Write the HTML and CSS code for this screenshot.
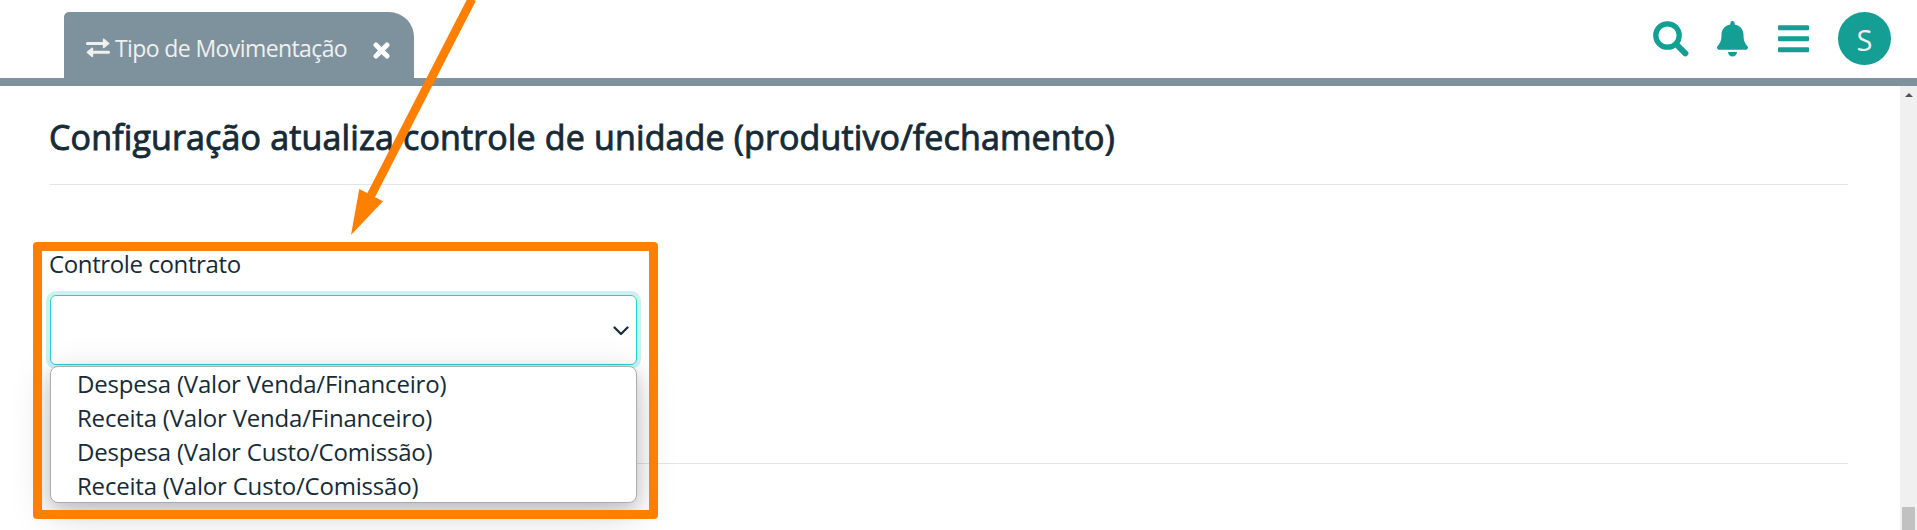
FILE: index.html
```html
<!DOCTYPE html>
<html lang="pt-BR">
<head>
<meta charset="utf-8">
<title>Tipo de Movimentação</title>
<link rel="stylesheet" href="styles.css">
</head>
<body>
<header class="topbar">
  <div class="tab">
    <svg class="tab-icon" viewBox="0 0 24 20"><path d="M1.2 4h15.600V1.500q.2-1.300 1.500-.7l4.900 4.200q.7.500 0 1L18.300 10q-1.300.6-1.500-.7V7H1.200Q0 7 0 5.500T1.200 4zM22.800 12.700H7.200v-2.300q-.2-1.300-1.500-.7L.8 13.700q-.7.600 0 1.100l4.900 4.200q1.300.5 1.500-.8V15.700h15.600q1.200 0 1.200-1.500t-1.200-1.500z"/></svg>
    <span class="tab-label">Tipo de Movimentação</span>
    <svg class="tab-close" viewBox="0 0 17 17"><path d="M3 3l11 11M14 3L3 14"/></svg>
  </div>
  <nav class="actions">
    <svg class="icon-search" viewBox="0 0 36 36"><circle cx="14.500" cy="14.500" r="11.700" fill="none" stroke="currentColor" stroke-width="5.300"/><path d="M24 24l8.300 8.300" fill="none" stroke="currentColor" stroke-width="6" stroke-linecap="round"/></svg>
    <svg class="icon-bell" viewBox="0 0 31 36"><path d="M15.500 0a2.200 2.200 0 0 0-2.200 2.200v1.200C8 4.400 4.500 8.500 4.500 13.500c0 6.500-1.500 8.800-3.900 11.400-1.300 1.500-.3 3.900 1.700 3.900h26.400c2 0 3-2.400 1.700-3.900-2.400-2.600-3.900-4.900-3.900-11.400 0-5-3.500-9.100-8.800-10.100V2.200A2.200 2.200 0 0 0 15.500 0zM11 31h9a4.500 4.500 0 0 1-9 0z"/></svg>
    <svg class="icon-menu" viewBox="0 0 31 28"><rect y=".2" width="31" height="5" rx="1"/><rect y="11.200" width="31" height="5" rx="1"/><rect y="22.200" width="31" height="5" rx="1"/></svg>
    <div class="avatar">S</div>
  </nav>
</header>
<div class="page">
  <main class="content">
    <h2 class="title">Configuração atualiza controle de unidade (produtivo/fechamento)</h2>
    <hr class="rule">
    <div class="field">
      <label class="label">Controle contrato</label>
      <div class="select">
        <svg class="chevron" viewBox="0 0 16 10"><path d="M1.500 1.500L8 8l6.500-6.500"/></svg>
        <ul class="options">
          <li>Despesa (Valor Venda/Financeiro)</li>
          <li>Receita (Valor Venda/Financeiro)</li>
          <li>Despesa (Valor Custo/Comissão)</li>
          <li>Receita (Valor Custo/Comissão)</li>
        </ul>
      </div>
    </div>
    <hr class="rule">
  </main>
  <aside class="scrollbar"><span class="scroll-up"></span><span class="scroll-thumb"></span></aside>
</div>
<div class="highlight"></div>
<svg class="arrow" viewBox="0 0 500 240"><path d="M472-1L371 195.500" fill="none" stroke="#ff8000" stroke-width="8.600"/><path d="M351 235l8.300-46L383 201.300z" fill="#ff8000"/></svg>
</body>
</html>
```
FILE: styles.css
```css
* { box-sizing: border-box; }
body {
  margin: 0;
  height: 530px;
  overflow: hidden;
  position: relative;
  display: flex;
  flex-direction: column;
  background: #fff;
  color: #162b36;
  font-family: "Open Sans", "Noto Sans", sans-serif;
  font-size: 24px;
}
svg { display: block; fill: currentColor; }
.topbar {
  flex: none;
  height: 86px;
  padding: 12px 26px 0 64px;
  border-bottom: 8px solid #7d929d;
  display: flex;
  justify-content: space-between;
  align-items: flex-start;
}
.tab {
  width: 350px;
  height: 66px;
  padding-left: 22px;
  display: flex;
  background: #7d929d;
  border-radius: 5px 25px 0 0;
  color: #f0f0f0;
}
.tab-icon { flex: none; width: 24px; height: 20px; margin-top: 26px; }
.tab-label { flex: none; width: 263px; padding-left: 5px; line-height: 34px; margin-top: 19px; font-size: 23px; letter-spacing: -0.6px; white-space: nowrap; }
.tab-close { flex: none; width: 17px; height: 17px; margin-top: 30px; fill: none; stroke: #fff; stroke-width: 5; stroke-linecap: round; }
.actions { display: flex; align-items: flex-start; color: #149e94; }
.icon-search { width: 36px; height: 36px; margin: 9px 28px 0 0; }
.icon-bell { width: 31px; height: 36px; margin: 9px 30px 0 0; }
.icon-menu { width: 31px; height: 28px; margin: 13px 29px 0 0; }
.avatar {
  width: 53px;
  height: 53px;
  border-radius: 50%;
  background: #149e94;
  color: #f0f0f0;
  font-size: 29px;
  line-height: 55px;
  text-align: center;
}
.page { flex: 1; display: flex; min-height: 0; }
.content { flex: 1; padding: 25px 52px 0 50px; }
.title {
  margin: 0;
  height: 73px;
  font-size: 34px;
  line-height: 52px;
  font-weight: 400;
  -webkit-text-stroke: 0.9px currentColor;
  letter-spacing: 0.14px;
  text-indent: -1px;
  white-space: nowrap;
}
.rule { margin: 0; border: 0; height: 1px; background: #e2e4e5; }
.field { height: 278px; padding-top: 62px; width: 587px; }
.label { display: block; height: 48px; line-height: 34px; letter-spacing: -0.38px; text-indent: -1px; }
.select {
  position: relative;
  height: 70px;
  padding: 2px 7px 0 0;
  display: flex;
  align-items: center;
  justify-content: flex-end;
  border: 1px solid #21d3c5;
  border-radius: 6px;
  box-shadow: 0 0 0 4px #c6f5f1;
}
.chevron { width: 16px; height: 10px; fill: none; stroke: #162b36; stroke-width: 2.200; stroke-linecap: round; stroke-linejoin: round; }
.options {
  position: absolute;
  top: 70px;
  left: -1px;
  width: 587px;
  height: 137px;
  margin: 0;
  padding: 0 0 0 26px;
  list-style: none;
  background: #fff;
  border: 1px solid #a9adaf;
  border-radius: 8px;
  box-shadow: 0 11px 40px rgba(0, 0, 0, .18), 0 6px 16px rgba(0, 0, 0, .14);
  line-height: 34px;
  white-space: nowrap;
  letter-spacing: -0.2px;
}
.scrollbar { width: 17px; background: #f0f0f0; display: flex; flex-direction: column; align-items: center; justify-content: space-between; padding-top: 7px; }
.scroll-up { border: 4px solid transparent; border-top: 0; border-bottom: 4px solid #505050; }
.scroll-thumb { width: 13px; height: 23px; background: #c1c1c1; }
.highlight { position: absolute; left: 33px; top: 242px; width: 625px; height: 277px; border: 9px solid #ff8000; border-radius: 4px; }
.arrow { position: absolute; left: 0; top: 0; width: 500px; height: 240px; }
```
